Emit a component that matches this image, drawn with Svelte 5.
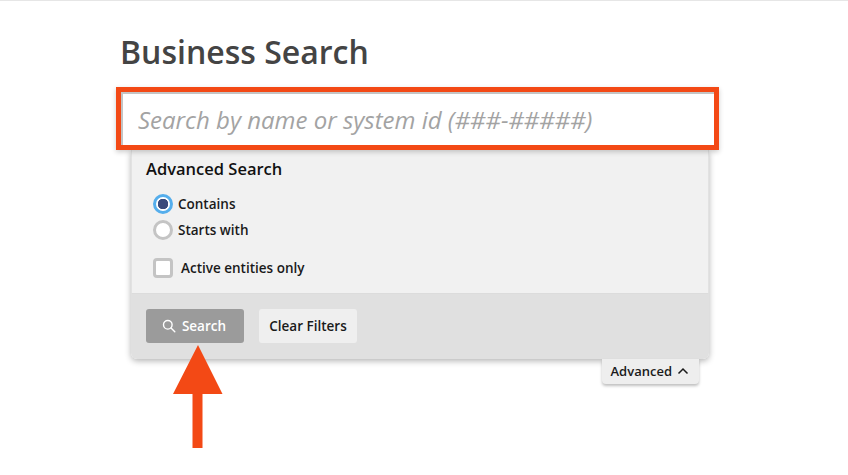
<script>
    let mode = $state('contains')
    let activeOnly = $state(false)
</script>

<div class="page">
    <main class="content">
        <h1>Business Search</h1>

        <div class="search-box">
            <input type="text" placeholder="Search by name or system id (###-#####)" />
        </div>

        <section class="advanced">
            <div class="filters">
                <h2>Advanced Search</h2>
                <div class="radios">
                    <label class="radio">
                        <input type="radio" bind:group={mode} value="contains" />
                        <span>Contains</span>
                    </label>
                    <label class="radio">
                        <input type="radio" bind:group={mode} value="starts" />
                        <span>Starts with</span>
                    </label>
                </div>
                <label class="check">
                    <input type="checkbox" bind:checked={activeOnly} />
                    <span>Active entities only</span>
                </label>
            </div>
            <div class="actions">
                <button class="btn-search">
                    <svg width="14" height="14" viewBox="0 0 14 14" fill="none" stroke="currentColor" stroke-width="1.4">
                        <circle cx="5.8" cy="5.8" r="4.3" />
                        <path d="M9 9l3.8 3.8" stroke-linecap="round" />
                    </svg>
                    Search
                </button>
                <button class="btn-clear">Clear Filters</button>
            </div>
        </section>

        <div class="toggle-row">
            <button class="toggle">
                Advanced
                <svg width="12" height="8" viewBox="0 0 12 8" fill="none" stroke="currentColor" stroke-width="1.5">
                    <path d="M1.5 6.5L6 2l4.5 4.5" />
                </svg>
            </button>
        </div>
    </main>

    <!-- annotation arrow on top of the screenshot -->
    <svg class="arrow" width="50" height="103" viewBox="0 0 50 103">
        <path d="M25 0L49.500 49H29.500V103H19.500V49H0Z" fill="#f34915" />
    </svg>
</div>

<style>
    :global(body) {
        background: #fff;
        font-family: "Open Sans", "Noto Sans", sans-serif;
    }

    .page {
        position: relative;
        width: 848px;
        height: 475px;
        box-sizing: border-box;
        border-top: 1px solid #e6e6e6;
        overflow: hidden;
    }

    .content {
        width: 603px;
        margin-left: 116px;
    }

    h1 {
        margin: 0;
        padding: 29px 0 14px 4px;
        font-size: 32px;
        line-height: 43px;
        font-weight: 600;
        color: #444;
    }

    .search-box {
        position: relative;
        z-index: 1;
        box-sizing: border-box;
        height: 63px;
        border: 5px solid #f34915;
        background: #fff;
        box-shadow: 0 2px 5px rgba(0, 0, 0, 0.2);
    }

    .search-box input {
        display: block;
        box-sizing: border-box;
        width: 100%;
        height: 100%;
        border: none;
        border-top: 2px solid #c4c4c4;
        border-left: 2px solid #c4c4c4;
        padding: 0 0 1px 15px;
        outline: none;
        background: #fff;
        font-family: inherit;
        font-size: 24px;
        font-style: italic;
    }

    .search-box input::placeholder {
        color: #a3a3a3;
        opacity: 1;
    }

    .advanced {
        margin: 0 10px 0 15px;
        border-radius: 0 0 6px 6px;
        overflow: hidden;
        box-shadow: 0 2px 6px rgba(0, 0, 0, 0.3);
    }

    .filters {
        box-sizing: border-box;
        height: 144px;
        padding: 8px 14px 0;
        background: #f1f1f1;
        border: 1px solid #e2e2e2;
        border-top: none;
        border-bottom: 1px solid #dcdcdc;
    }

    h2 {
        margin: 0;
        font-size: 16.500px;
        line-height: 22px;
        font-weight: 600;
        color: #111;
    }

    .radios {
        display: flex;
        flex-direction: column;
        gap: 6px;
        margin: 14px 0 0 7px;
    }

    label {
        display: flex;
        align-items: center;
        font-size: 13.500px;
        font-weight: 600;
        color: #1a1a1a;
    }

    .radio {
        height: 20px;
        gap: 5px;
    }

    .radio input {
        appearance: none;
        box-sizing: border-box;
        width: 20px;
        height: 20px;
        margin: 0;
        border: 3px solid #c4c4c4;
        border-radius: 50%;
        background: #fff;
    }

    .radio input:checked {
        border-color: #55aeec;
        background: radial-gradient(circle, #3a4a7b 0 5px, #fff 5.500px);
    }

    .check {
        height: 20px;
        gap: 8px;
        margin: 18px 0 0 7px;
    }

    .check input {
        appearance: none;
        box-sizing: border-box;
        width: 20px;
        height: 20px;
        margin: 0;
        border: 3px solid #c4c4c4;
        border-radius: 4px;
        background: #fff;
    }

    .actions {
        display: flex;
        align-items: flex-start;
        gap: 15px;
        height: 65px;
        box-sizing: border-box;
        padding: 15px 15px 0;
        background: #e0e0e0;
    }

    button {
        border: none;
        border-radius: 3px;
        font-family: inherit;
        font-size: 13.500px;
        font-weight: 600;
    }

    .btn-search {
        display: flex;
        align-items: center;
        justify-content: center;
        gap: 6px;
        width: 98px;
        height: 34px;
        padding: 0 2px 0 0;
        background: #9b9b9b;
        color: #fff;
    }

    .btn-clear {
        width: 98px;
        height: 34px;
        padding: 0;
        background: #efefef;
        color: #1a1a1a;
    }

    .toggle-row {
        display: flex;
        justify-content: flex-end;
        padding-right: 20px;
    }

    .toggle {
        display: flex;
        align-items: center;
        gap: 5px;
        height: 25px;
        padding: 0 10px 2px 9px;
        border-radius: 0 0 4px 4px;
        background: #eeeeee;
        color: #1a1a1a;
        font-size: 13px;
        box-shadow: 0 2px 3px rgba(0, 0, 0, 0.25);
    }

    .arrow {
        position: absolute;
        left: 173px;
        top: 344px;
    }
</style>
